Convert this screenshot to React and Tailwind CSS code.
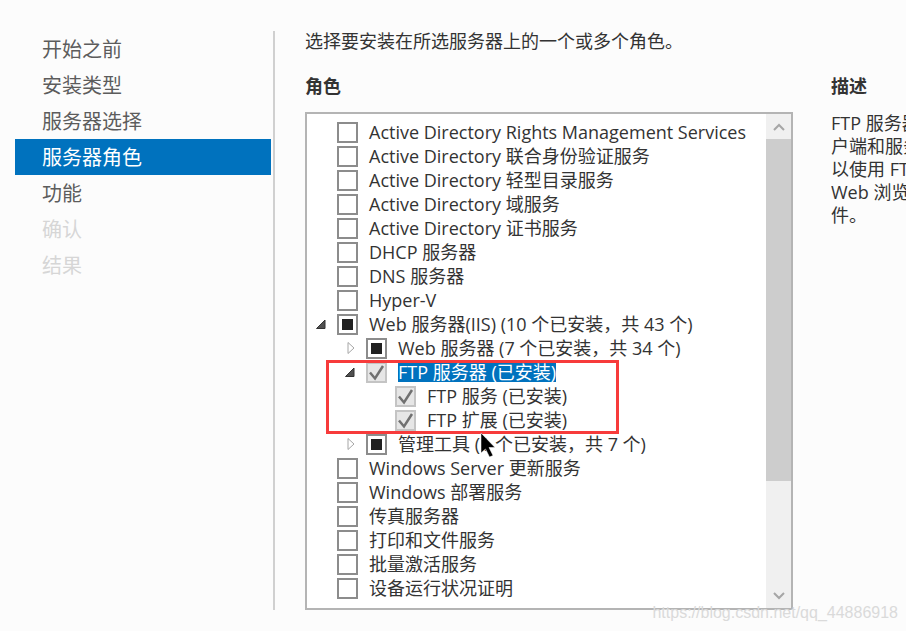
import { useState } from 'react';

const steps = [
    { label: '开始之前' },
    { label: '安装类型' },
    { label: '服务器选择' },
    { label: '服务器角色', current: true },
    { label: '功能' },
    { label: '确认', disabled: true },
    { label: '结果', disabled: true },
];

const roles = [
    { id: 'adrms', label: 'Active Directory Rights Management Services' },
    { id: 'adfs', label: 'Active Directory 联合身份验证服务' },
    { id: 'adlds', label: 'Active Directory 轻型目录服务' },
    { id: 'adds', label: 'Active Directory 域服务' },
    { id: 'adcs', label: 'Active Directory 证书服务' },
    { id: 'dhcp', label: 'DHCP 服务器' },
    { id: 'dns', label: 'DNS 服务器' },
    { id: 'hyperv', label: 'Hyper-V' },
    {
        id: 'iis',
        label: 'Web 服务器(IIS) (10 个已安装，共 43 个)',
        state: 'partial',
        expanded: true,
        children: [
            { id: 'web', label: 'Web 服务器 (7 个已安装，共 34 个)', state: 'partial', expanded: false },
            {
                id: 'ftp',
                label: 'FTP 服务器 (已安装)',
                state: 'installed',
                expanded: true,
                marked: true,
                children: [
                    { id: 'ftp-service', label: 'FTP 服务 (已安装)', state: 'installed' },
                    { id: 'ftp-ext', label: 'FTP 扩展 (已安装)', state: 'installed' },
                ],
            },
            { id: 'tools', label: '管理工具 (1 个已安装，共 7 个)', state: 'partial', expanded: false },
        ],
    },
    { id: 'wsus', label: 'Windows Server 更新服务' },
    { id: 'wds', label: 'Windows 部署服务' },
    { id: 'fax', label: '传真服务器' },
    { id: 'print', label: '打印和文件服务' },
    { id: 'volume', label: '批量激活服务' },
    { id: 'health', label: '设备运行状况证明' },
];

function Expander({ open, onClick }) {
    return (
        <button type="button" onClick={onClick} aria-label={open ? '折叠' : '展开'}>
            <svg width="12" height="14" viewBox="0 0 12 14">
                {open ? (
                    <path d="M11 3v8.500H2.500z" fill="#505050" stroke="#333" />
                ) : (
                    <path d="M5 1.500v11L11 7z" fill="#fff" stroke="#a6a6a6" />
                )}
            </svg>
        </button>
    );
}

function RoleCheckbox({ id, state }) {
    const installed = state === 'installed';
    const partial = state === 'partial';

    return (
        <span className="relative size-[21px] shrink-0">
            <input
                id={id}
                type="checkbox"
                defaultChecked={installed}
                disabled={installed}
                ref={(el) => {
                    if (el) el.indeterminate = partial;
                }}
                className="block size-full appearance-none border-2 border-[#8c8c8c] bg-white disabled:border-[#c4c4c4] disabled:bg-[#e6e6e6]"
            />
            {partial && <span className="pointer-events-none absolute inset-[5px] bg-[#212121]" />}
            {installed && (
                <svg className="pointer-events-none absolute inset-0" width="21" height="21" viewBox="0 0 21 21">
                    <path d="M4 10.500l5 6L17 4" fill="none" stroke="#707070" strokeWidth="2.500" />
                </svg>
            )}
        </span>
    );
}

function RoleItem({ role, selected, onSelect }) {
    const [open, setOpen] = useState(role.expanded);

    return (
        <li className="relative">
            <div className="flex h-6 items-center">
                <span className="flex w-[30px] shrink-0 items-center justify-center pr-1">
                    {role.expanded !== undefined && <Expander open={open} onClick={() => setOpen(!open)} />}
                </span>
                <RoleCheckbox id={role.id} state={role.state} />
                <label
                    htmlFor={role.id}
                    onClick={() => onSelect(role.id)}
                    className={`ml-[11px] whitespace-nowrap text-lg leading-5 ${selected === role.id ? 'bg-[#0072be] text-white' : ''}`}
                >
                    {role.label}
                </label>
            </div>
            {role.children && open && (
                <ul className="pl-[29px]">
                    {role.children.map((child) => (
                        <RoleItem key={child.id} role={child} selected={selected} onSelect={onSelect} />
                    ))}
                </ul>
            )}
            {/* red frame and pointer over the FTP group */}
            {role.marked && (
                <>
                    <div className="pointer-events-none absolute top-0 -bottom-0.5 -left-[10px] w-[293px] border-3 border-[#f73b3b]" />
                    <svg className="pointer-events-none absolute top-[72px] left-[144px] z-10" width="17" height="26" viewBox="0 0 17 26">
                        <path d="M1 1v20l4.500-4 4 8 3.500-1.500-4-8h6z" fill="#000" stroke="#fff" strokeWidth="0.500" />
                    </svg>
                </>
            )}
        </li>
    );
}

function ScrollArrow({ up }) {
    return (
        <button type="button" aria-label={up ? '向上' : '向下'} className="flex h-[25px] w-full shrink-0 items-center justify-center">
            <svg width="12" height="8" viewBox="0 0 12 8">
                <path d={up ? 'M1 7l5-5 5 5' : 'M1 1l5 5 5-5'} fill="none" stroke="#a6a6a6" strokeWidth="2" />
            </svg>
        </button>
    );
}

export default function App() {
    const [selected, setSelected] = useState('ftp');

    return (
        <div className="relative min-h-screen bg-[#fcfcfc] font-['Open_Sans','Noto_Sans_CJK_SC',sans-serif] text-[#333]">
            <div className="flex pt-[31px] pl-[15px]">
                <nav className="w-[260px] shrink-0 border-r-2 border-[#d0d0d0] pr-[2px] font-['Noto_Sans_CJK_SC',sans-serif]">
                    {steps.map((step) => (
                        <a
                            key={step.label}
                            href="#"
                            aria-current={step.current ? 'step' : undefined}
                            className={`flex h-9 items-center pl-[27px] text-xl ${step.current ? 'bg-[#0072be] text-white' : step.disabled ? 'text-[#d6d6d6]' : 'text-[#5c5c5c]'}`}
                        >
                            {step.label}
                        </a>
                    ))}
                </nav>

                <main className="ml-[30px] min-w-0 flex-1">
                    <p className="h-[45px] text-lg leading-5">选择要安装在所选服务器上的一个或多个角色。</p>
                    <h2 className="h-9 text-lg leading-5 font-bold">角色</h2>
                    <div className="flex border-2 border-[#b4b4b4] bg-white">
                        <ul className="min-w-0 flex-1 pt-1.5 pb-2">
                            {roles.map((role) => (
                                <RoleItem key={role.id} role={role} selected={selected} onSelect={setSelected} />
                            ))}
                        </ul>
                        <div className="flex w-[25px] shrink-0 flex-col bg-[#f0f0f0]">
                            <ScrollArrow up />
                            <div className="flex-1">
                                <div className="h-[77%] bg-[#cdcdcd]" />
                            </div>
                            <ScrollArrow />
                        </div>
                    </div>
                </main>

                <aside className="ml-[38px] w-[75px] shrink-0 overflow-hidden pt-[45px]">
                    <h2 className="h-9 text-lg leading-5 font-bold">描述</h2>
                    <p className="text-lg leading-[23px] whitespace-nowrap">
                        FTP 服务器
                        <br />
                        户端和服务
                        <br />
                        以使用 FTP
                        <br />
                        Web 浏览
                        <br />
                        件。
                    </p>
                </aside>
            </div>

            <span className="absolute right-2 bottom-2 font-['Liberation_Sans',sans-serif] text-base leading-5 text-[#dadada]">
                https://blog.csdn.net/qq_44886918
            </span>
        </div>
    );
}
